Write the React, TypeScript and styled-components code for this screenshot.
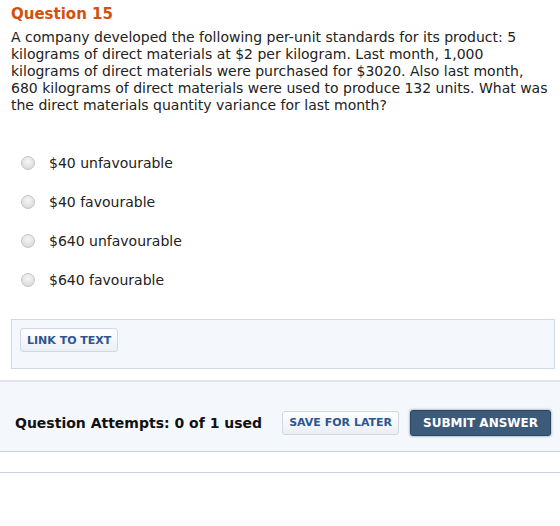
import styled, { createGlobalStyle } from "styled-components";

const GlobalStyle = createGlobalStyle`
  body {
    margin: 0;
    background: #ffffff;
    font-family: "DejaVu Sans", Verdana, sans-serif;
    color: #222222;
  }
`;

const options = [
  "$40 unfavourable",
  "$40 favourable",
  "$640 unfavourable",
  "$640 favourable",
];

export default function App() {
  return (
    <>
      <GlobalStyle />
      <Page>
        <Question>
          <Title>Question 15</Title>
          <Prompt>
            A company developed the following per-unit standards for its
            product: 5 kilograms of direct materials at $2 per kilogram. Last
            month, 1,000 kilograms of direct materials were purchased for
            $3020. Also last month, 680 kilograms of direct materials were used
            to produce 132 units. What was the direct materials quantity
            variance for last month?
          </Prompt>
          <Options>
            {options.map((label) => (
              <Option key={label}>
                <Radio />
                <span>{label}</span>
              </Option>
            ))}
          </Options>
          <LinkBox>
            <LightButton>LINK TO TEXT</LightButton>
          </LinkBox>
        </Question>
        <Footer>
          <Attempts>Question Attempts: 0 of 1 used</Attempts>
          <Actions>
            <LightButton>SAVE FOR LATER</LightButton>
            <SubmitButton>SUBMIT ANSWER</SubmitButton>
          </Actions>
        </Footer>
        <Rule />
      </Page>
    </>
  );
}

const Page = styled.div`
  width: 560px;
  display: flex;
  flex-direction: column;
`;

const Question = styled.div`
  padding: 5px 5px 0 11px;
  display: flex;
  flex-direction: column;
`;

const Title = styled.h2`
  margin: 0;
  font-size: 15px;
  font-weight: bold;
  line-height: 18px;
  color: #d2510a;
`;

const Prompt = styled.p`
  width: 540px;
  margin: 6px 0 0;
  font-size: 14px;
  line-height: 17px;
  color: #222222;
`;

const Options = styled.div`
  display: flex;
  flex-direction: column;
  gap: 20px;
  margin: 39px 0 0 10px;
`;

const Option = styled.label`
  display: flex;
  align-items: center;
  gap: 14px;
  height: 19px;
  font-size: 14px;
  color: #222222;
`;

const Radio = styled.span`
  width: 14px;
  height: 14px;
  border-radius: 50%;
  border: 1px solid #c4c4c4;
  box-sizing: border-box;
  background: radial-gradient(circle at 50% 35%, #f6f6f6 0%, #e2e2e2 60%, #d2d2d2 100%);
`;

const LinkBox = styled.div`
  margin-top: 30px;
  height: 50px;
  box-sizing: border-box;
  padding: 8px 8px;
  background: #f4f7fb;
  border: 1px solid #cfd7e3;
  display: flex;
  align-items: flex-start;
`;

const LightButton = styled.button`
  font-family: "DejaVu Sans", Verdana, sans-serif;
  font-size: 11px;
  font-weight: bold;
  color: #2d5591;
  height: 24px;
  padding: 0 6px;
  border: 1px solid #cfd8e4;
  border-radius: 3px;
  background: linear-gradient(#ffffff, #eaeff5);
  cursor: pointer;
`;

const Footer = styled.div`
  margin-top: 11px;
  height: 72px;
  box-sizing: border-box;
  border-top: 2px solid #e1e6ee;
  border-bottom: 1px solid #c6d2e4;
  background: #f4f7fb;
  display: flex;
  align-items: center;
  padding: 12px 9px 0 15px;
`;

const Attempts = styled.div`
  flex: 1;
  font-size: 14px;
  font-weight: bold;
  color: #111111;
`;

const Actions = styled.div`
  display: flex;
  align-items: center;
  gap: 11px;
`;

const SubmitButton = styled.button`
  font-family: "DejaVu Sans", Verdana, sans-serif;
  font-size: 12px;
  font-weight: bold;
  color: #ffffff;
  height: 26px;
  padding: 0 12px;
  border: 1px solid #2c4662;
  border-radius: 3px;
  background: #3c5a7a;
  box-shadow: 0 0 2px 1px #b8c4d2;
  cursor: pointer;
`;

const Rule = styled.div`
  margin-top: 20px;
  height: 1px;
  background: #c6d2e4;
`;
